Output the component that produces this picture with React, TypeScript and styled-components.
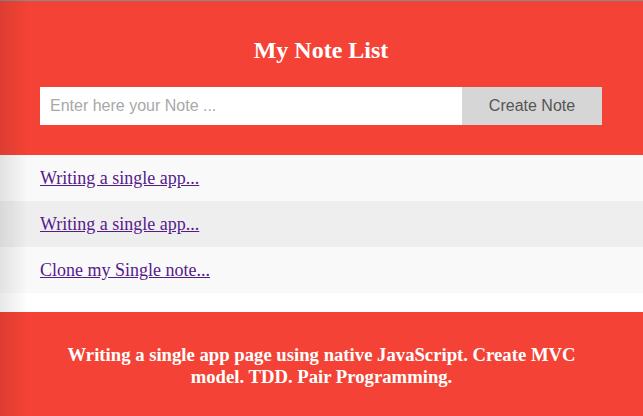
import React from "react";
import styled, { createGlobalStyle } from "styled-components";

const GlobalStyle = createGlobalStyle`
  html, body { margin: 0; padding: 0; background: #ffffff; }
  body {
    font-family: "Liberation Serif", "Times New Roman", serif;
    border-top: 1px solid #8a8a8a;
    min-height: 415px;
    position: relative;
  }
  body::before {
    content: "";
    position: fixed;
    left: 0; top: 0; bottom: 0;
    width: 28px;
    background: linear-gradient(to right, rgba(0,0,0,0.09), rgba(0,0,0,0));
    pointer-events: none;
    z-index: 10;
  }
`;

const Header = styled.header`
  background: #f44336;
  padding: 35px 41px 30px 40px;
`;

const Title = styled.h1`
  margin: 0 0 23px;
  font-family: "Liberation Serif", "Times New Roman", serif;
  font-size: 24px;
  line-height: 28px;
  font-weight: bold;
  color: #ffffff;
  text-align: center;
`;

const Form = styled.form`
  display: flex;
  height: 38px;
`;

const Input = styled.input`
  flex: 1;
  min-width: 0;
  border: none;
  outline: none;
  margin: 0;
  padding: 0 10px;
  background: #ffffff;
  font-family: "Liberation Sans", Arial, sans-serif;
  font-size: 16px;
  color: #333;
  &::placeholder { color: #a8a8a8; }
`;

const Button = styled.button`
  width: 140px;
  border: none;
  margin: 0;
  padding: 0;
  background: #d6d6d6;
  color: #555555;
  font-family: "Liberation Sans", Arial, sans-serif;
  font-size: 16px;
`;

const List = styled.ul`
  list-style: none;
  margin: 0 0 19px;
  padding: 0;
`;

const Row = styled.li<{ $alt?: boolean }>`
  background: ${(p) => (p.$alt ? "#eeeeee" : "#f9f9f9")};
  height: 46px;
  padding: 0 40px;
  display: flex;
  align-items: center;
  font-family: "Liberation Serif", "Times New Roman", serif;
  font-size: 18px;
`;

const NoteLink = styled.a`
  font-family: "Liberation Serif", "Times New Roman", serif;
  font-size: 18px;
  line-height: 22px;
  color: #551a8b;
  text-decoration: underline;
`;

const Footer = styled.footer`
  background: #f44336;
  padding: 32px 60px 40px;
  min-height: 104px;
  box-sizing: border-box;
`;

const FooterText = styled.p`
  margin: 0;
  font-family: "Liberation Serif", "Times New Roman", serif;
  font-size: 18.7px;
  line-height: 22px;
  font-weight: bold;
  color: #ffffff;
  text-align: center;
`;

const notes = ["Writing a single app...", "Writing a single app...", "Clone my Single note..."];

export default function App() {
  return (
    <>
      <GlobalStyle />
      <Header>
        <Title>My Note List</Title>
        <Form onSubmit={(e) => e.preventDefault()}>
          <Input placeholder="Enter here your Note ..." />
          <Button type="submit">Create Note</Button>
        </Form>
      </Header>
      <List>
        {notes.map((n, i) => (
          <Row key={i} $alt={i % 2 === 1}>
            <NoteLink href="#">{n}</NoteLink>
          </Row>
        ))}
      </List>
      <Footer>
        <FooterText>
          Writing a single app page using native JavaScript. Create MVC model. TDD. Pair Programming.
        </FooterText>
      </Footer>
    </>
  );
}
